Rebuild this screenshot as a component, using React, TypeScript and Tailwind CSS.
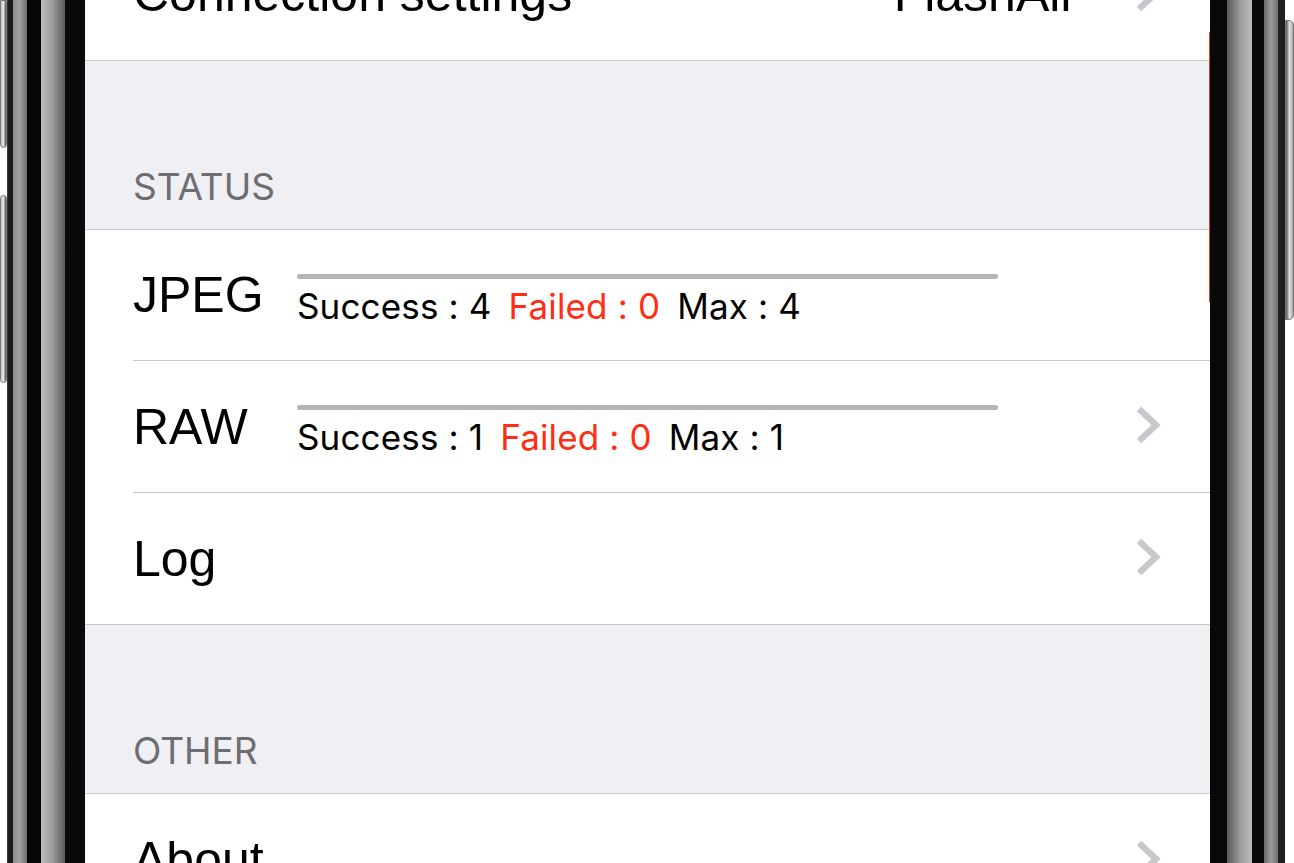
import React from 'react';

const labelFont = { fontFamily: '"Liberation Sans", Arial, sans-serif' };
const sfFont = { fontFamily: 'Inter, "Liberation Sans", sans-serif' };

const Chevron = () => (
  <svg width="26" height="40" viewBox="0 0 26 40" className="shrink-0 -mt-[3px]">
    <path d="M4 4 L21 20 L4 36" fill="none" stroke="#c7c7cc" strokeWidth="6.5" strokeLinejoin="miter" />
  </svg>
);

const Counter = ({ success, failed, max }: { success: number; failed: number; max: number }) => (
  <div className="flex flex-col pt-[44px] self-start">
    <div className="h-[5px] w-[701px] rounded-full bg-[#b5b5b5]" />
    <div className="mt-[10px] flex text-[35px] leading-none tracking-[0.15px] text-black whitespace-pre" style={sfFont}>
      <span>Success : {success}</span>
      <span className="ml-[17px] text-[#ff2d14]">Failed : {failed}</span>
      <span className="ml-[17px]">Max : {max}</span>
    </div>
  </div>
);

const Row = ({
  label,
  height,
  last,
  chevron = true,
  detail,
  children,
}: {
  label: string;
  height: string;
  last?: boolean;
  chevron?: boolean;
  detail?: string;
  children?: React.ReactNode;
}) => (
  <div className="bg-white pl-[48px]">
    <div className={`flex items-center pr-[49px] ${height} ${last ? '' : 'border-b border-[#c8c7cc]'}`}>
      <div className="min-w-[164px] shrink-0 whitespace-nowrap text-[50px] leading-none text-black" style={labelFont}>
        {label}
      </div>
      {children}
      <div className="flex-1" />
      {detail && (
        <span className="mr-[58px] text-[50px] leading-none text-black" style={labelFont}>
          {detail}
        </span>
      )}
      {chevron && <Chevron />}
    </div>
  </div>
);

const Section = ({ title }: { title: string }) => (
  <div className="flex h-[168px] items-end bg-[#efeff4] pb-[24px] pl-[48px]">
    <span className="text-[37px] leading-none text-[#6d6d72]" style={sfFont}>
      {title}
    </span>
  </div>
);

const LeftFrame = () => (
  <div className="flex h-[863px] w-[85px] shrink-0">
    <div className="flex w-[7px] flex-col bg-white">
      <div className="h-[148px] rounded-b-[4px] border border-[#777] bg-linear-to-r from-[#c8c8c8] via-[#e6e6e6] to-[#555]" />
      <div className="h-[47px]" />
      <div className="h-[188px] rounded-[4px] border border-[#777] bg-linear-to-r from-[#c8c8c8] via-[#e6e6e6] to-[#555]" />
    </div>
    <div className="w-[6px] border-l border-[#3a3a3a] bg-[#1c1c1c]" />
    <div className="w-[14px] bg-linear-to-r from-[#8e8e8e] via-[#a2a2a2] to-[#6c6c6c]" />
    <div className="w-[14px] bg-[#070707]" />
    <div className="w-[24px] bg-linear-to-r from-[#bdbdbd] via-[#999] to-[#5c5c5c]" />
    <div className="w-[20px] bg-[#0a0a0a]" />
  </div>
);

const RightFrame = () => (
  <div className="flex h-[863px] w-[84px] shrink-0">
    <div className="w-[17px] bg-[#080808]" />
    <div className="w-[25px] bg-linear-to-r from-[#5a5a5a] via-[#999] to-[#bcbcbc]" />
    <div className="w-[12px] bg-[#0a0a0a]" />
    <div className="w-[14px] bg-linear-to-r from-[#6a6a6a] via-[#9a9a9a] to-[#707070]" />
    <div className="w-[7px] bg-[#1e1e1e]" />
    <div className="flex w-[9px] flex-col bg-white">
      <div className="h-[20px]" />
      <div className="h-[300px] rounded-r-[5px] border border-[#777] bg-linear-to-r from-[#555] via-[#e2e2e2] to-[#a8a8a8]" />
    </div>
  </div>
);

export default function App() {
  return (
    <div className="flex h-[863px] w-[1294px] overflow-hidden bg-white">
      <LeftFrame />
      <div className="relative h-[863px] w-[1125px] shrink-0 overflow-hidden bg-[#efeff4]">
        <div className="-mt-[72px] flex flex-col">
          <div className="border-b border-[#c8c7cc]">
            <Row label="Connection settings" height="h-[132px]" last detail="FlashAir" />
          </div>
          <Section title="STATUS" />
          <div className="border-y border-[#c8c7cc]">
            <Row label="JPEG" height="h-[131px]" chevron={false}>
              <Counter success={4} failed={0} max={4} />
            </Row>
            <Row label="RAW" height="h-[132px]">
              <Counter success={1} failed={0} max={1} />
            </Row>
            <Row label="Log" height="h-[131px]" last />
          </div>
          <Section title="OTHER" />
          <div className="border-t border-[#c8c7cc]">
            <Row label="About" height="h-[132px]" last />
          </div>
        </div>
        <div className="absolute right-0 top-[32px] h-[270px] w-px bg-[#e8452f]" />
      </div>
      <RightFrame />
    </div>
  );
}
